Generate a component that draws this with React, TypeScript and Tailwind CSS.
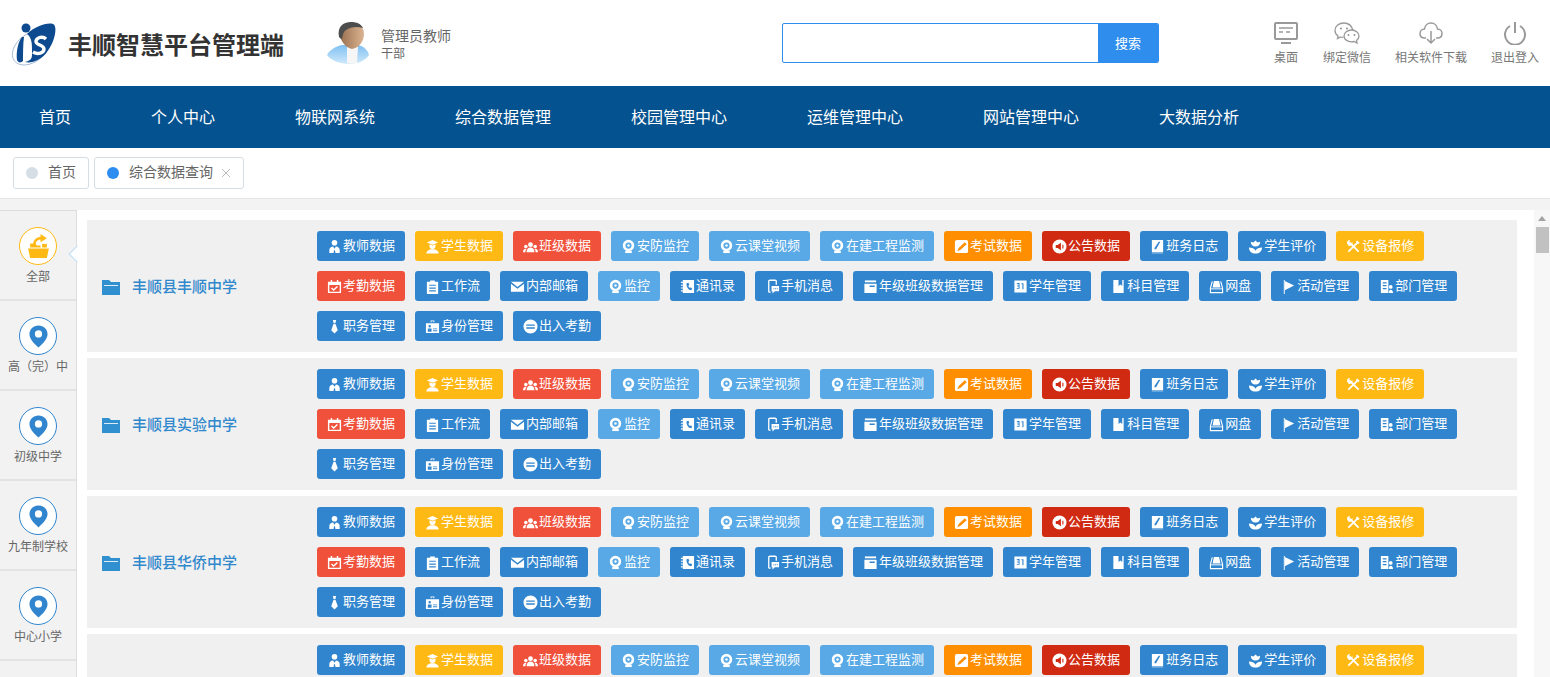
import React from 'react';

type Btn = { label: string; color: string; icon: string };

const BLUE = 'bg-[#3085ce]';
const YELLOW = 'bg-[#ffb914]';
const RED = 'bg-[#f0513b]';
const SKY = 'bg-[#58a9e6]';
const ORANGE = 'bg-[#ff8f00]';
const DARKRED = 'bg-[#d12a12]';

const buttons: Btn[] = [
  { label: '教师数据', color: BLUE, icon: 'teacher' },
  { label: '学生数据', color: YELLOW, icon: 'student' },
  { label: '班级数据', color: RED, icon: 'group' },
  { label: '安防监控', color: SKY, icon: 'cam' },
  { label: '云课堂视频', color: SKY, icon: 'cam' },
  { label: '在建工程监测', color: SKY, icon: 'cam' },
  { label: '考试数据', color: ORANGE, icon: 'exam' },
  { label: '公告数据', color: DARKRED, icon: 'notice' },
  { label: '班务日志', color: BLUE, icon: 'diary' },
  { label: '学生评价', color: BLUE, icon: 'lotus' },
  { label: '设备报修', color: YELLOW, icon: 'tools' },
  { label: '考勤数据', color: RED, icon: 'calcheck' },
  { label: '工作流', color: BLUE, icon: 'clipboard' },
  { label: '内部邮箱', color: BLUE, icon: 'mail' },
  { label: '监控', color: SKY, icon: 'cam' },
  { label: '通讯录', color: BLUE, icon: 'contacts' },
  { label: '手机消息', color: BLUE, icon: 'phone' },
  { label: '年级班级数据管理', color: BLUE, icon: 'grade' },
  { label: '学年管理', color: BLUE, icon: 'year' },
  { label: '科目管理', color: BLUE, icon: 'book' },
  { label: '网盘', color: BLUE, icon: 'drive' },
  { label: '活动管理', color: BLUE, icon: 'flag' },
  { label: '部门管理', color: BLUE, icon: 'dept' },
  { label: '职务管理', color: BLUE, icon: 'tie' },
  { label: '身份管理', color: BLUE, icon: 'idcard' },
  { label: '出入考勤', color: BLUE, icon: 'exchange' },
];

const schools = ['丰顺县丰顺中学', '丰顺县实验中学', '丰顺县华侨中学', ''];
const navItems = ['首页', '个人中心', '物联网系统', '综合数据管理', '校园管理中心', '运维管理中心', '网站管理中心', '大数据分析'];
const sideItems = ['高（完）中', '初级中学', '九年制学校', '中心小学'];

function BtnIcon({ name }: { name: string }) {
  const common = { viewBox: '0 0 16 16', fill: 'currentColor', className: 'h-[15px] w-[15px]' };
  switch (name) {
    case 'teacher':
      return (
        <svg {...common}>
          <circle cx="8" cy="4" r="3" />
          <path d="M2.500 15v-3.500C2.500 9.500 4.500 8 6.500 8L8 10.500 9.500 8c2 0 4 1.500 4 3.500V15H9l-.5-3h-1L7 15z" />
        </svg>
      );
    case 'student':
      return (
        <svg {...common}>
          <path d="M8 1l6 2.600L8 6.200 2 3.600z" />
          <path d="M4.800 5.500l3.200 1.400 3.200-1.400V7.500a3.200 3.200 0 01-6.400 0z" />
          <path d="M1.500 15.500c0-2.800 2.500-4.500 6.500-4.500s6.500 1.700 6.500 4.500z" />
        </svg>
      );
    case 'group':
      return (
        <svg {...common}>
          <circle cx="8" cy="6" r="2.600" />
          <circle cx="3" cy="8" r="1.900" />
          <circle cx="13" cy="8" r="1.900" />
          <path d="M3.800 14c0-2.800 1.700-5 4.200-5s4.200 2.200 4.200 5z" />
          <path d="M0 14c0-2 1-3.500 3-3.500.4 0 .7.100.7.100-.8 1-1.200 2-1.200 3.400z" />
          <path d="M16 14c0-2-1-3.500-3-3.500-.4 0-.7.100-.7.100.8 1 1.200 2 1.200 3.400z" />
        </svg>
      );
    case 'cam':
      return (
        <svg {...common}>
          <circle cx="8" cy="7" r="4.700" fill="none" stroke="currentColor" strokeWidth="2.800" />
          <circle cx="8" cy="7" r="1.300" />
          <path d="M4.500 12.500h7V15h-7z" />
        </svg>
      );
    case 'exam':
      return (
        <svg {...common}>
          <path fillRule="evenodd" d="M3 1h10a2 2 0 012 2v10a2 2 0 01-2 2H3a2 2 0 01-2-2V3a2 2 0 012-2zM11.500 3.500l2 2-6.500 6-3.500 1.500 1.500-3.500z" />
        </svg>
      );
    case 'notice':
      return (
        <svg {...common}>
          <path fillRule="evenodd" d="M8 .500a7.500 7.500 0 100 15 7.500 7.500 0 000-15zM4 6.300h2L9.500 4v8L6 9.700H4zM11 6h1.200v4H11z" />
        </svg>
      );
    case 'diary':
      return (
        <svg {...common}>
          <path fillRule="evenodd" d="M2 1h12v13H2zM11 3L6.500 11H4.800V9.500L9.300 3z" />
          <path d="M2 14.600h12v.800H2z" opacity=".6" />
        </svg>
      );
    case 'lotus':
      return (
        <svg {...common}>
          <path d="M8 1.500l2.200 2.200 2.800-.9c0 3.200-1.900 5.200-5 5.200S3 6 3 2.800l2.800.9z" />
          <path d="M1 9c3 0 6 1 7 3.500C9 10 12 9 15 9c0 4-3 6.500-7 6.500S1 13 1 9z" />
        </svg>
      );
    case 'tools':
      return (
        <svg {...common}>
          <path d="M4 4l9.500 9.500" stroke="currentColor" strokeWidth="1.900" />
          <path d="M12.500 3.500L2.500 13.500" stroke="currentColor" strokeWidth="1.900" />
          <path d="M1 4.500A3.500 3.500 0 014.500 1L3.500 3 5 4.500 7 3.500A3.500 3.500 0 013 7.500z" />
          <path d="M12 1.500l2.500 2.500-1.500 1.500-2.500-2.500z" />
        </svg>
      );
    case 'calcheck':
      return (
        <svg {...common}>
          <path d="M4 1h1.500v3H4zM10.500 1H12v3h-1.500z" />
          <path fillRule="evenodd" d="M1 3h14v12H1zM2.500 6.500v7h11v-7z" />
          <path d="M4.800 9.500l2.300 2.300 4-3.800" fill="none" stroke="currentColor" strokeWidth="1.500" />
        </svg>
      );
    case 'clipboard':
      return (
        <svg {...common}>
          <path fillRule="evenodd" d="M2 3h3.500V1.500h5V3H14v13H2zM4.500 6v1.300h7V6zM4.500 9v1.300h7V9zM4.500 12v1.300h7V12z" />
        </svg>
      );
    case 'mail':
      return (
        <svg {...common}>
          <path d="M1 3h14L8 8.500z" />
          <path d="M1 5l7 5.500L15 5v8.500H1z" />
        </svg>
      );
    case 'contacts':
      return (
        <svg {...common}>
          <path fillRule="evenodd" d="M3 1h12v14H3zM7 4.500L9 4l1 2.500-1.200.8c.3 1 1 1.800 1.800 2.300l1-.9L13 10.500l-1 1.500C9 12 6.500 8 7 4.500z" />
          <path d="M1 3h2v1.200H1zM1 6h2v1.200H1zM1 9h2v1.200H1zM1 12h2v1.200H1z" />
        </svg>
      );
    case 'phone':
      return (
        <svg {...common}>
          <path d="M4 14V2.500A1.200 1.200 0 015.200 1.300h5.600A1.200 1.200 0 0112 2.500V6" fill="none" stroke="currentColor" strokeWidth="1.400" />
          <path d="M4 14h2" stroke="currentColor" strokeWidth="1.400" />
          <path fillRule="evenodd" d="M7 7.500h8V13h-4.500L8 15.500V13H7zM9 9.800v1h1v-1zM10.800 9.800v1h1v-1zM12.600 9.800v1h1v-1z" />
        </svg>
      );
    case 'grade':
      return (
        <svg {...common}>
          <path d="M2 1.500h12v2H2z" />
          <path fillRule="evenodd" d="M1.500 5h13v10h-13zM7 7v1.500h5.500V7z" />
        </svg>
      );
    case 'year':
      return (
        <svg {...common}>
          <path fillRule="evenodd" d="M1.500 1.500h13v13h-13zM4 4.500v1h2v1.500H4.500v1H6v1.500H4v1h3v-6.500zM9 4.500v1h1v5.500h1.200V4.500z" />
        </svg>
      );
    case 'book':
      return (
        <svg {...common}>
          <path fillRule="evenodd" d="M2.500 1h11v14h-11zM8 1v6.500l2-1.700 2 1.700V1z" />
        </svg>
      );
    case 'drive':
      return (
        <svg {...common}>
          <path d="M5.200 2h5.600l1.400 7H3.800z" />
          <path d="M3.500 2.500L1.500 10v4.500h13V10l-2-7.500" fill="none" stroke="currentColor" strokeWidth="1.200" />
          <path d="M1.500 10.500h13" stroke="currentColor" strokeWidth="1" />
        </svg>
      );
    case 'flag':
      return (
        <svg {...common}>
          <path d="M3 1h1v15H3z" />
          <path d="M4 2l10 5-10 5z" />
        </svg>
      );
    case 'dept':
      return (
        <svg {...common}>
          <path fillRule="evenodd" d="M2 1h8v14H2zM4 3.500v1.300h4V3.500zM4 6.500v1.300h4V6.500zM4 9.500v1.300h4V9.500z" />
          <circle cx="12.500" cy="8.500" r="2" />
          <path d="M10.500 15c0-2 .6-3.500 2-3.500s2.500 1.500 2.500 3.500z" />
        </svg>
      );
    case 'tie':
      return (
        <svg {...common}>
          <path d="M6.300 1h3.400L9 4.200H7z" />
          <path d="M7 5h2l2.500 7L8 15.500 4.500 12z" />
        </svg>
      );
    case 'idcard':
      return (
        <svg {...common}>
          <path d="M6 1.500h4v2h-1V2.500H7v1H6z" />
          <path fillRule="evenodd" d="M1 4.500h14V15H1zM3 10v3.500h4V10zM8.500 10v1h4.500v-1zM8.500 12v1h4.500v-1zM5 6.500a1.300 1.300 0 100 2.600 1.300 1.300 0 000-2.600z" />
        </svg>
      );
    case 'exchange':
      return (
        <svg {...common}>
          <path fillRule="evenodd" d="M8 .500a7.500 7.500 0 100 15 7.500 7.500 0 000-15zM3.500 5.800h9v1.500h-9zM3.500 8.800h9v1.500h-9z" />
        </svg>
      );
    default:
      return null;
  }
}

function Logo() {
  return (
    <svg viewBox="0 0 48 46" className="h-[46px] w-[48px]">
      <ellipse cx="21" cy="28" rx="21" ry="14" fill="none" stroke="#8fa9c9" strokeWidth="0.700" transform="rotate(-38 21 28)" />
      <path d="M17 14C24 7 37 2 43 4c5 2 2 18-6 28-5 7-15 12-22 10 8-2 7-5 7-12 0-6 0-12-5-16z" fill="#0d4a8f" />
      <circle cx="16" cy="8" r="4.500" fill="#0d4a8f" />
      <path d="M12 17c-4 5-6 15-5 23 1 3 4 3 6 1 0-8 0-17 1-24z" fill="#0d4a8f" />
      <path d="M36 19c-3-3-9-2-10 2s8 4 8 8-6 6-11 3" fill="none" stroke="#fff" strokeWidth="3.400" />
    </svg>
  );
}

function Avatar() {
  return (
    <svg viewBox="0 0 44 44" className="h-[44px] w-[44px]">
      <defs>
        <linearGradient id="skin" x1="0" y1="0" x2="1" y2="0">
          <stop offset="0" stopColor="#9a7150" />
          <stop offset="1" stopColor="#dcb492" />
        </linearGradient>
        <linearGradient id="shirt" x1="0" y1="0" x2="0" y2="1">
          <stop offset="0" stopColor="#7fc0f2" />
          <stop offset="1" stopColor="#cfe9fb" />
        </linearGradient>
      </defs>
      <path d="M0 34c2-5 10-9 15-10h16c5 1 10 5 11 10-3 5-11 9-20 9S3 39 0 34z" fill="url(#shirt)" />
      <path d="M20 26h11l-1 16c-3 1-7 1-10 0z" fill="#f6f6f6" />
      <path d="M13 13c0-7 5-11 12-11s12 4 12 11c0 7-5 14-12 15-6-1-12-8-12-15z" fill="url(#skin)" />
      <path d="M12 16C10 6 16 1 24 1c6 0 10 2 12 6-6-2-13-1-17 2-3 2-3 5-4 9-1 0-2-1-3-2z" fill="#4d4d4d" />
    </svg>
  );
}

function TopAction({ label, children }: { label: string; children: React.ReactNode }) {
  return (
    <div className="flex flex-col items-center text-[12px] leading-[16px] text-[#777]">
      <div className="flex h-[28px] items-center justify-center text-[#999]">{children}</div>
      <span className="mt-[3px]">{label}</span>
    </div>
  );
}

function Pin() {
  return (
    <svg viewBox="0 0 20 24" className="h-[23px] w-[19px]">
      <path fillRule="evenodd" fill="#3085ce" d="M10 .500C4.500.500.500 4.500.500 9.500c0 5 5 10 9.500 14 4.500-4 9.500-9 9.500-14 0-5-4-9-9.500-9zM10 5.500a3.800 3.800 0 100 7.600 3.800 3.800 0 000-7.600z" />
    </svg>
  );
}

function School({ name }: { name: string }) {
  return (
    <div className="mb-[6px] flex h-[132px] shrink-0 items-center bg-[#f0f0f0]">
      <div className="flex w-[230px] shrink-0 items-center pt-[2px] pl-[15px]">
        <svg viewBox="0 0 18 15" className="h-[15px] w-[18px]">
          <path d="M0 0h7l2 2h9v13H0z" fill="#3190cf" />
          <path d="M2 5h14v1H2z" fill="#dcebf6" />
        </svg>
        <span className="mt-[1px] ml-[12px] text-[15px] font-medium text-[#3088cd]">{name}</span>
      </div>
      <div className="flex flex-1 flex-wrap gap-[10px]">
        {buttons.map((b) => (
          <div key={b.label} className={`flex h-[30px] items-center rounded-[3px] pr-[10px] pl-[10px] text-[13px] text-white ${b.color}`}>
            <span className="flex w-[16px] shrink-0 items-center">
              <BtnIcon name={b.icon} />
            </span>
            <span className="whitespace-nowrap">{b.label}</span>
          </div>
        ))}
      </div>
    </div>
  );
}

export default function App() {
  return (
    <div className="flex h-screen flex-col overflow-hidden bg-[#f3f3f3] font-['Liberation_Sans','Noto_Sans_CJK_SC',sans-serif]">
      <header className="flex h-[86px] shrink-0 items-center bg-white">
        <div className="ml-[10px] flex w-[317px] items-center">
          <Logo />
          <span className="mt-[5px] ml-[10px] text-[24px] font-bold whitespace-nowrap text-[#333]">丰顺智慧平台管理端</span>
        </div>
        <Avatar />
        <div className="ml-[10px] flex w-[401px] flex-col pt-[4px] text-[#666]">
          <span className="text-[14px] leading-[18px]">管理员教师</span>
          <span className="text-[12px] leading-[18px]">干部</span>
        </div>
        <div className="flex h-[40px] w-[377px] overflow-hidden rounded-[2px] border border-[#2e8ded] bg-white">
          <div className="flex-1" />
          <div className="flex w-[60px] items-center justify-center bg-[#2e8ded] pt-[1px] text-[13px] text-white">搜索</div>
        </div>
        <div className="ml-auto flex gap-[24px] pr-[11px] pb-[2px]">
          <TopAction label="桌面">
            <svg viewBox="0 0 26 24" className="h-[24px] w-[26px]" fill="none" stroke="currentColor">
              <rect x="2" y="2" width="22" height="16" rx="1" strokeWidth="2" />
              <path d="M6 7h14M6 11h4M13 11h4" strokeWidth="1.300" />
              <path d="M8 22h10" strokeWidth="2" />
            </svg>
          </TopAction>
          <TopAction label="绑定微信">
            <svg viewBox="0 0 28 24" className="h-[24px] w-[28px]" fill="none" stroke="currentColor" strokeWidth="1.300">
              <path d="M11 2C6 2 2 5 2 9.500c0 2.500 1.200 4.300 3 5.500l-.5 2.500 3-1.500c1 .3 2 .4 3 .4" />
              <path d="M20 9C18.500 4.500 15 2 11 2" />
              <path d="M18.500 9c4 0 7.500 2.500 7.500 6 0 2-1 3.500-2.500 4.500l.5 2.500-3-1.500c-.8.2-1.600.3-2.500.3-4 0-7.500-2.500-7.500-5.800S14.500 9 18.500 9z" />
              <circle cx="8" cy="7.500" r="1.100" fill="currentColor" stroke="none" />
              <circle cx="14" cy="7.500" r="1.100" fill="currentColor" stroke="none" />
              <circle cx="15.500" cy="14" r="1" fill="currentColor" stroke="none" />
              <circle cx="21.500" cy="14" r="1" fill="currentColor" stroke="none" />
            </svg>
          </TopAction>
          <TopAction label="相关软件下载">
            <svg viewBox="0 0 26 24" className="h-[24px] w-[26px]" fill="none" stroke="currentColor" strokeWidth="1.500">
              <path d="M8 17H6.500C3.500 17 2 15 2 12.500S4 8 6.500 8C7 4 10 2 13 2s6 2 6.500 6C22 8 24 10 24 12.500S22.500 17 19.500 17H18" />
              <path d="M13 10v12M9 18l4 4 4-4" />
            </svg>
          </TopAction>
          <TopAction label="退出登入">
            <svg viewBox="0 0 24 24" className="h-[24px] w-[24px]" fill="none" stroke="currentColor" strokeWidth="2">
              <path d="M7 5a10 10 0 1010 0" />
              <path d="M12 1v11" />
            </svg>
          </TopAction>
        </div>
      </header>

      <nav className="flex h-[62px] shrink-0 items-center bg-[#04528f] pt-[2px] pl-[39px] text-[16px] text-white">
        {navItems.map((n) => (
          <span key={n} className="mr-[80px] whitespace-nowrap">
            {n}
          </span>
        ))}
      </nav>

      <div className="flex h-[51px] shrink-0 items-center gap-[5px] border-b border-[#e6e6e6] bg-white pb-[1px] pl-[13px]">
        <div className="flex h-[32px] items-center rounded-[3px] border border-[#d5dee5] pr-[12px] pl-[12px] text-[14px] text-[#666]">
          <span className="mr-[10px] h-[12px] w-[12px] rounded-full bg-[#d5dee5]" />
          首页
        </div>
        <div className="flex h-[32px] items-center rounded-[3px] border border-[#d5dee5] pr-[12px] pl-[12px] text-[14px] text-[#666]">
          <span className="mr-[10px] h-[12px] w-[12px] rounded-full bg-[#2d8cf0]" />
          综合数据查询
          <svg viewBox="0 0 10 10" className="ml-[8px] h-[10px] w-[10px]" fill="none" stroke="#bbb" strokeWidth="1">
            <path d="M1 1l8 8M9 1l-8 8" />
          </svg>
        </div>
      </div>

      <div className="mt-[11px] flex min-h-0 flex-1">
        <aside className="relative w-[77px] shrink-0 border-t border-r border-[#ddd] bg-[#f2f2f2]">
          <div className="flex h-[90px] flex-col items-center border-b-2 border-[#e3e3e3] pt-[16px]">
            <div className="flex h-[38px] w-[38px] items-center justify-center rounded-full border border-[#ffb914] bg-white">
              <svg viewBox="0 0 24 24" className="h-[25px] w-[25px]" fill="#ffb914">
                <path d="M2 14h20l-2 9H4z" />
                <path d="M4 9h5l1.500 2H14v2H4z" />
                <path d="M15.500 9.500H20V13h-4.500z" />
                <path d="M8 10C8 6 11 4 15 4" fill="none" stroke="#ffb914" strokeWidth="2.500" />
                <path d="M14 0l6 4-6 4z" />
              </svg>
            </div>
            <span className="mt-[2px] text-[12px] leading-[20px] text-[#666]">全部</span>
          </div>
          {sideItems.map((s) => (
            <div key={s} className="flex h-[90px] flex-col items-center border-b-2 border-[#e3e3e3] pt-[16px]">
              <div className="flex h-[38px] w-[38px] items-center justify-center rounded-full border border-[#3085ce] bg-white">
                <Pin />
              </div>
              <span className="mt-[1px] font-['Noto_Sans_CJK_TC',sans-serif] text-[12px] leading-[20px] whitespace-nowrap text-[#666]">{s}</span>
            </div>
          ))}
          <div className="absolute top-[37px] right-[-7px] h-[12px] w-[12px] rotate-45 border-b border-l border-[#bcdcf3] bg-white" />
        </aside>

        <main className="flex min-w-0 flex-1 flex-col overflow-hidden bg-white pt-[10px] pr-[17px] pl-[10px]">
          {schools.map((s, i) => (
            <School key={i} name={s} />
          ))}
        </main>

        <div className="flex w-[16px] shrink-0 flex-col items-center bg-[#f7f7f7]">
          <div className="mt-[6px] h-0 w-0 border-r-[4px] border-b-[5px] border-l-[4px] border-r-transparent border-b-[#a3a3a3] border-l-transparent" />
          <div className="mt-[6px] h-[26px] w-[13px] bg-[#c1c1c1]" />
        </div>
      </div>
    </div>
  );
}
